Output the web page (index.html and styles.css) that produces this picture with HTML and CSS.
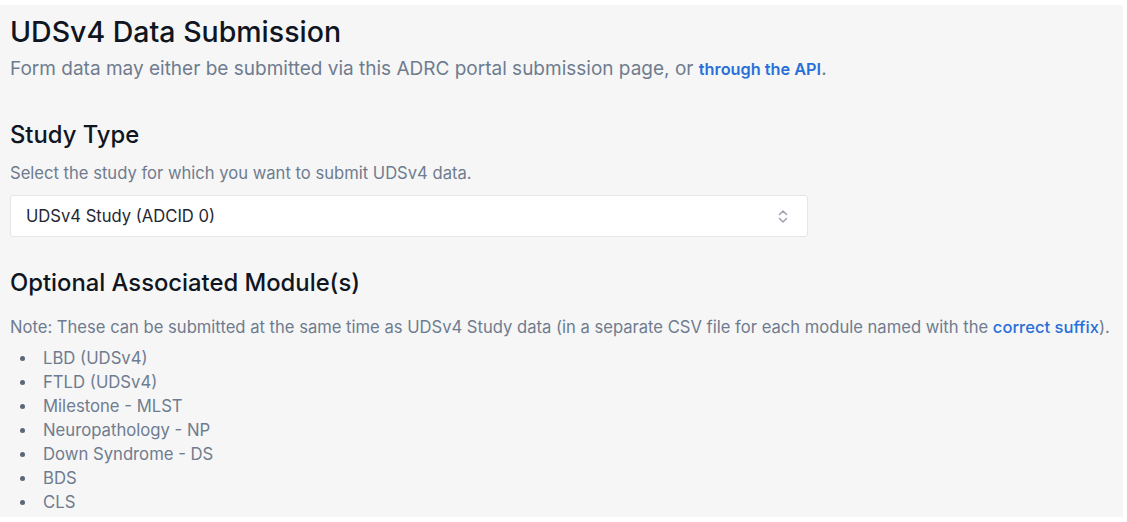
FILE: index.html
```html
<!DOCTYPE html>
<html lang="en">
<head>
<meta charset="utf-8">
<title>UDSv4 Data Submission</title>
<link rel="stylesheet" href="styles.css">
</head>
<body>
<main class="page">
  <h1 class="title">UDSv4 Data Submission</h1>
  <p class="lead">Form data may either be submitted via this ADRC portal submission page, or <a class="link link-bold" href="#">through the API</a>.</p>

  <section class="section section-study">
    <h2 class="heading">Study Type</h2>
    <p class="help">Select the study for which you want to submit UDSv4 data.</p>
    <div class="select">
      <span class="select-value">UDSv4 Study (ADCID 0)</span>
      <svg class="select-icon" width="12" height="15" viewBox="0 0 12 15" aria-hidden="true">
        <path d="M2.5 5.5 L6 2 L9.5 5.5" fill="none" stroke="#9aa3af" stroke-width="1.5" stroke-linecap="round" stroke-linejoin="round"/>
        <path d="M2.5 9.5 L6 13 L9.5 9.5" fill="none" stroke="#9aa3af" stroke-width="1.5" stroke-linecap="round" stroke-linejoin="round"/>
      </svg>
    </div>
  </section>

  <section class="section section-modules">
    <h2 class="heading">Optional Associated Module(s)</h2>
    <p class="note">Note: These can be submitted at the same time as UDSv4 Study data (in a separate CSV file for each module named with the <a class="link link-medium" href="#">correct suffix</a>).</p>
    <ul class="modules">
      <li>LBD (UDSv4)</li>
      <li>FTLD (UDSv4)</li>
      <li>Milestone - MLST</li>
      <li>Neuropathology - NP</li>
      <li>Down Syndrome - DS</li>
      <li>BDS</li>
      <li>CLS</li>
    </ul>
  </section>
</main>
</body>
</html>
```

FILE: styles.css
```css
html, body {
  margin: 0;
  padding: 0;
  background: #ffffff;
}

body {
  font-family: Inter, "Noto Sans", sans-serif;
  padding: 5px 4px 5px 0;
}

.page {
  background: #f6f6f6;
  height: 512px;
  padding: 9px 4px 0 10px;
  box-sizing: border-box;
  overflow: hidden;
}

.title {
  margin: 0;
  font-size: 28.5px;
  font-weight: 500;
  line-height: 36px;
  color: #0f1521;
}

.lead {
  margin: 5px 0 0 0;
  font-size: 19px;
  line-height: 28px;
  color: #6f7c8f;
}

.link {
  color: #2870d8;
  text-decoration: none;
}

.link-bold {
  font-weight: 600;
  font-size: 16.3px;
}

.link-medium {
  font-weight: 500;
}

.section-study {
  margin-top: 36px;
}

.section-modules {
  margin-top: 30px;
}

.heading {
  margin: 0;
  font-size: 23.8px;
  font-weight: 500;
  line-height: 32px;
  color: #0f1521;
}

.help {
  margin: 10px 0 0 0;
  font-size: 16.6px;
  line-height: 24px;
  color: #6f7c8f;
}

.select {
  margin-top: 10px;
  width: 798px;
  height: 42px;
  box-sizing: border-box;
  background: #ffffff;
  border: 1px solid #e3e6ea;
  border-radius: 3px;
  display: flex;
  align-items: center;
  justify-content: space-between;
  padding: 0 18px 0 15px;
}

.select-value {
  font-size: 16.6px;
  color: #1f2733;
}

.note {
  margin: 16px 0 0 0;
  font-size: 16.6px;
  line-height: 24px;
  color: #6f7c8f;
  white-space: nowrap;
}

.modules {
  margin: 7px 0 0 0;
  padding: 0;
  list-style: none;
  font-size: 16.7px;
  line-height: 24px;
  color: #6f7c8f;
}

.modules li {
  display: flex;
  align-items: center;
}

.modules li::before {
  content: "";
  flex: none;
  width: 5px;
  height: 5px;
  border-radius: 50%;
  background: #5b6678;
  margin: 0 18.5px 0 9.5px;
}
```
